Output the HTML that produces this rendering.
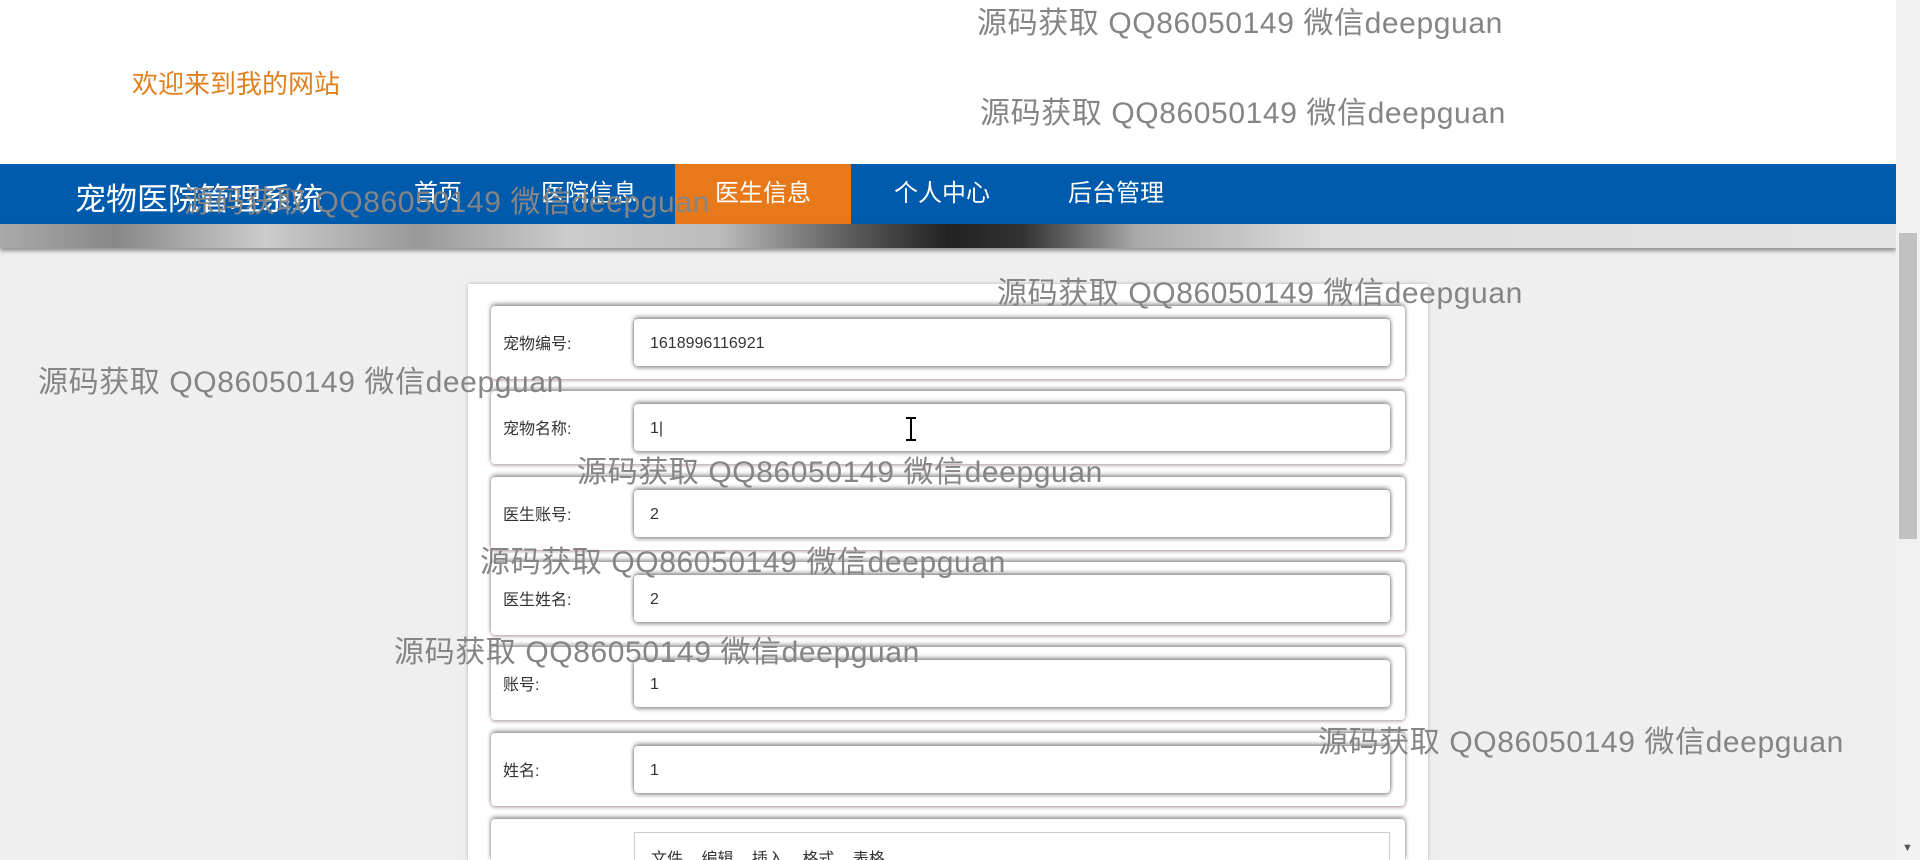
<!DOCTYPE html>
<html><head><meta charset="utf-8"><style>
*{margin:0;padding:0;box-sizing:border-box}
html,body{width:1920px;height:860px;overflow:hidden}
body{background:#efefef;font-family:"Liberation Sans","Noto Sans CJK SC",sans-serif;position:relative}
.top{position:absolute;left:0;top:0;width:1896px;height:164px;background:#fff}
.welcome{position:absolute;left:132px;top:64px;font-size:26px;color:#e0801f}
.nav{position:absolute;left:0;top:164px;width:1896px;height:60px;background:#005bac}
.title{position:absolute;left:75px;top:10px;font-size:31px;color:#fff}
.mi{position:absolute;top:0;height:60px;line-height:60px;font-size:24px;color:#fff;text-align:center}
.banner{position:absolute;left:0;top:224px;width:1896px;height:24px;background:linear-gradient(90deg,#aaa 0%,#888 6%,#ccc 14%,#999 22%,#ccc 30%,#bbb 38%,#666 44%,#222 50%,#333 54%,#aaa 60%,#ddd 70%,#e4e4e4 100%);box-shadow:0 3px 4px rgba(0,0,0,.4)}
.wm{position:absolute;font-size:30px;letter-spacing:0.6px;color:#858585;white-space:nowrap;z-index:5}
.card{position:absolute;left:468px;top:284px;width:960px;height:576px;background:#fff;box-shadow:0 0 4px rgba(0,0,0,.25);overflow:hidden}
.row{position:absolute;left:23px;width:914px;height:73px;background:#fff;border-radius:4px;box-shadow:0 -2px 5px rgba(0,0,0,.45),0 2px 3px rgba(140,90,90,.4)}
.lab{position:absolute;left:12px;top:24px;font-size:16px;color:#333}
.inp{position:absolute;left:143px;top:13px;width:756px;height:47px;background:#fff;border-radius:4px;box-shadow:0 -2px 5px rgba(0,0,0,.45),0 2px 4px rgba(0,0,0,.4);font-size:16px;color:#333;padding:16px 16px 0}
.sb{position:absolute;left:1896px;top:0;width:24px;height:860px;background:#f1f1f1}
.thumb{position:absolute;left:1899px;top:233px;width:18px;height:306px;background:#c1c1c1}
</style></head><body>
<div class="top"><div class="welcome">欢迎来到我的网站</div></div>
<div class="nav">
<div class="title">宠物医院管理系统</div>
<div class="mi" style="left:378px;width:120px">首页</div>
<div class="mi" style="left:505px;width:168px">医院信息</div>
<div class="mi" style="left:675px;width:176px;background:#e8791a">医生信息</div>
<div class="mi" style="left:856px;width:172px">个人中心</div>
<div class="mi" style="left:1032px;width:168px">后台管理</div>
</div>
<div class="banner"></div>
<div class="card">
<div class="row" style="top:22px"><div class="lab">宠物编号:</div><div class="inp">1618996116921</div></div>
<div class="row" style="top:107px"><div class="lab">宠物名称:</div><div class="inp">1|</div></div>
<div class="row" style="top:193px"><div class="lab">医生账号:</div><div class="inp">2</div></div>
<div class="row" style="top:278px"><div class="lab">医生姓名:</div><div class="inp">2</div></div>
<div class="row" style="top:363px"><div class="lab">账号:</div><div class="inp">1</div></div>
<div class="row" style="top:449px"><div class="lab">姓名:</div><div class="inp">1</div></div>
<div class="row" style="top:535px;height:41px;border-radius:4px 4px 0 0"><div class="inp" style="box-shadow:none;border:1px solid #ccc;border-bottom:none;border-radius:0;font-size:16px;padding:12px 16px;height:28px;overflow:hidden;word-spacing:14px">文件 编辑 插入 格式 表格</div></div>
</div>
<svg style="position:absolute;left:904px;top:417px" width="14" height="24"><path d="M2 1h10M7 1v22M2 23h10" stroke="#000" stroke-width="2" fill="none"/></svg>
<div class="wm" style="left:977px;top:-2px">源码获取 QQ86050149 微信deepguan</div>
<div class="wm" style="left:980px;top:88px">源码获取 QQ86050149 微信deepguan</div>
<div class="wm" style="left:184px;top:177px">源码获取 QQ86050149 微信deepguan</div>
<div class="wm" style="left:997px;top:268px">源码获取 QQ86050149 微信deepguan</div>
<div class="wm" style="left:38px;top:357px">源码获取 QQ86050149 微信deepguan</div>
<div class="wm" style="left:577px;top:447px">源码获取 QQ86050149 微信deepguan</div>
<div class="wm" style="left:480px;top:537px">源码获取 QQ86050149 微信deepguan</div>
<div class="wm" style="left:394px;top:627px">源码获取 QQ86050149 微信deepguan</div>
<div class="wm" style="left:1318px;top:717px">源码获取 QQ86050149 微信deepguan</div>
<div class="sb"></div><div class="thumb"></div>
<div style="position:absolute;left:1902px;top:842px;font-size:11px;color:#555">▼</div>
</body></html>
